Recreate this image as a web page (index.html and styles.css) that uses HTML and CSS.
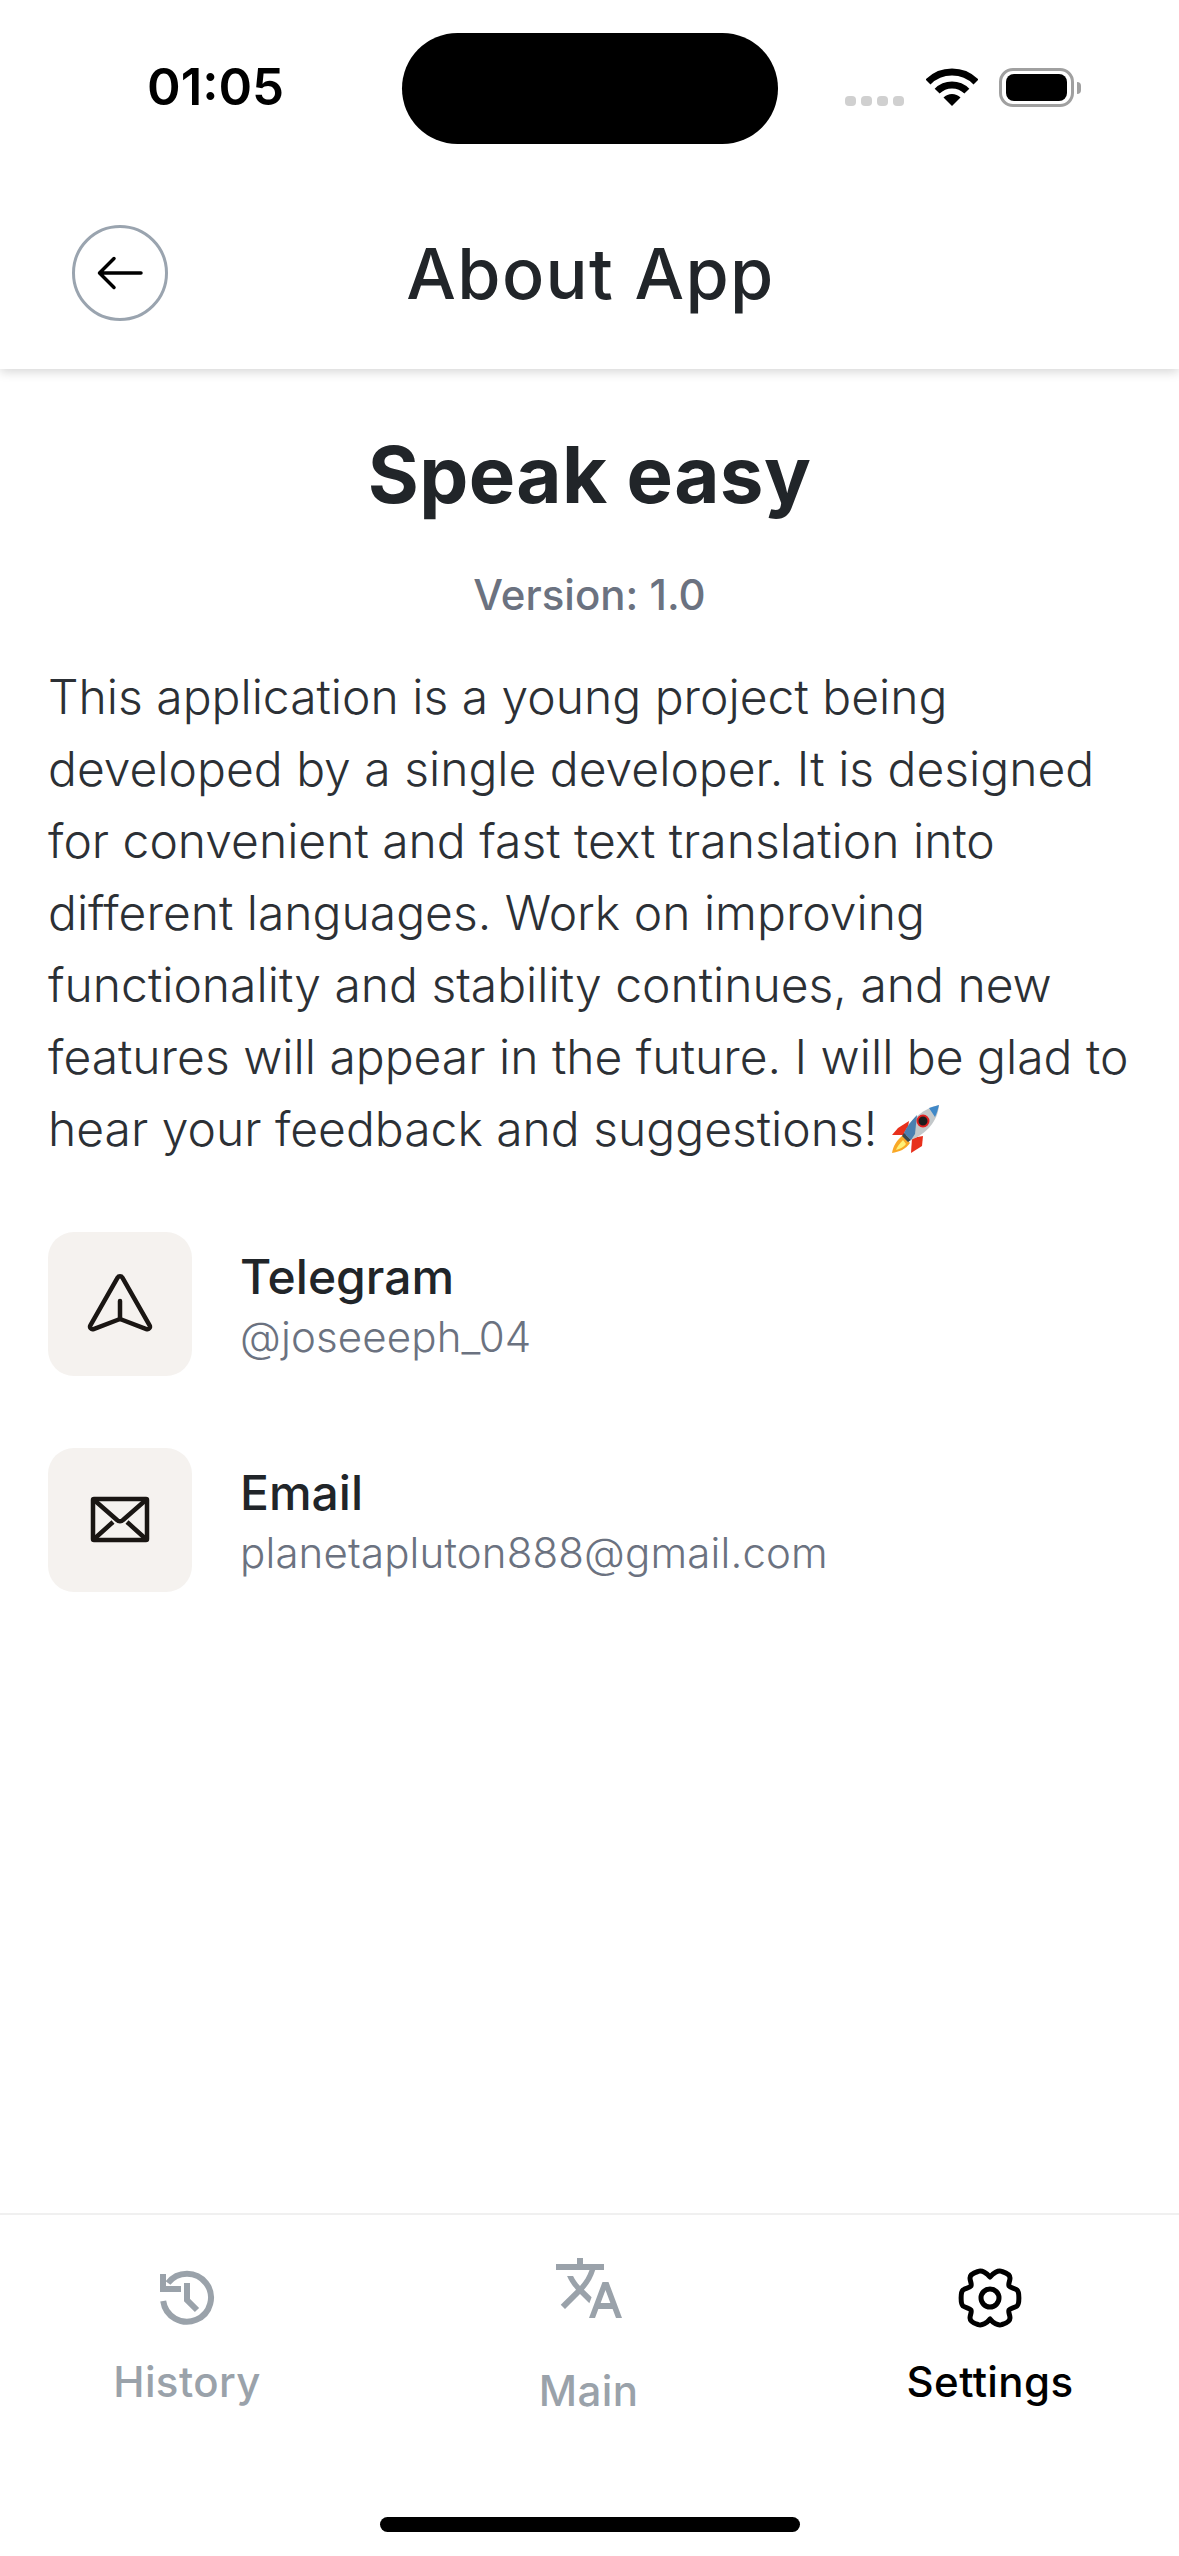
FILE: index.html
```html
<!DOCTYPE html>
<html lang="en">
<head>
  <meta charset="UTF-8" />
  <title>About App</title>
  <link rel="stylesheet" href="styles.css">
</head>
<body>
  <div class="screen">
    <div class="status-bar">
      <span class="time">01:05</span>
      <div class="island"></div>
      <div class="status-icons">
        <div class="signal"><i></i><i></i><i></i><i></i></div>
        <svg class="wifi" width="52" height="38" viewBox="0 0 52 38">
          <path d="M2 14A34 34 0 0 1 50 14M11.15 23.15A21 21 0 0 1 40.85 23.15" fill="none" stroke="#000" stroke-width="7"/>
          <path d="M26 38L17.5 29.5A12 12 0 0 1 34.5 29.5Z" fill="#000"/>
        </svg>
        <div class="battery"><div class="battery-fill"></div></div>
        <div class="battery-nub"></div>
      </div>
    </div>

    <div class="header">
      <div class="back">
        <svg width="48" height="48" viewBox="0 0 48 48" fill="none" stroke="#000" stroke-width="3.500" stroke-linecap="round" stroke-linejoin="round">
          <path d="M45 24H4M18 9.500L3.500 24 18 38.500"/>
        </svg>
      </div>
      <h2 class="title">About App</h2>
    </div>

    <div class="content">
      <h1 class="app-name">Speak easy</h1>
      <p class="version">Version: 1.0</p>
      <p class="about">This application is a young project being developed by a single developer. It is designed for convenient and fast text translation into different languages. Work on improving functionality and stability continues, and new features will appear in the future. I will be glad to hear your feedback and suggestions!
        <svg class="rocket" width="50" height="50" viewBox="0 0 50 50">
          <path d="M18 17L7 24 1 31l15 0z" fill="#e8301c"/>
          <path d="M32 32L31 42l-11 7 1-15z" fill="#e8301c"/>
          <path d="M12 31C6 36 2 42 1 49c7-1 14-4 18-10z" fill="#f9a825"/>
          <path d="M12 36c-3 3-6 7-7 10 4-1 8-3 10-6z" fill="#fff176"/>
          <path d="M13 29C20 15 33 4 48 1c-1 16-13 29-28 35z" fill="#c3c8ca"/>
          <path d="M38 4c3-1 7-2 10-3-1 4-2 8-4 12z" fill="#3f88c8"/>
          <path d="M13 29C16 22 21 16 26 11l-2 19-4 6z" fill="#4a7fb0"/>
          <circle cx="32" cy="17" r="5.500" fill="#1c1c1c" stroke="#e02020" stroke-width="2"/>
          <path d="M13 29l7 7-3 2-6-6z" fill="#37474f"/>
        </svg>
      </p>

      <div class="contact">
        <div class="contact-icon">
          <svg width="72" height="72" viewBox="0 0 72 72" fill="none" stroke="#1a1613" stroke-width="4.500" stroke-linejoin="round" stroke-linecap="round">
            <path d="M33.6 9.600a2.800 2.800 0 0 1 4.800 0L65.600 57.400a2.600 2.600 0 0 1-3.200 3.700L36 51 9.600 61.100a2.600 2.600 0 0 1-3.200-3.700Z"/>
            <path d="M36 33v18"/>
          </svg>
        </div>
        <div>
          <div class="contact-name">Telegram</div>
          <div class="contact-value">@joseeeph_04</div>
        </div>
      </div>

      <div class="contact">
        <div class="contact-icon">
          <svg width="72" height="72" viewBox="0 0 72 72" fill="none" stroke="#1a1613" stroke-width="4.500" stroke-linejoin="round">
            <rect x="9" y="15" width="54" height="41" rx="1"/>
            <path d="M9 15l24 21a4 4 0 0 0 6 0l24-21M9 56l20-18M63 56L43 38"/>
          </svg>
        </div>
        <div>
          <div class="contact-name">Email</div>
          <div class="contact-value">planetapluton888@gmail.com</div>
        </div>
      </div>
    </div>

    <div class="tabbar">
      <div class="tab">
        <svg width="72" height="72" viewBox="0 0 72 72" fill="none" stroke="#9aa2aa" stroke-width="6">
          <path d="M12 12v15h18"/>
          <path d="M12.200 39A24 24 0 1 0 17 21"/>
          <path d="M36 21v17l10 10"/>
        </svg>
        <span class="tab-label">History</span>
      </div>
      <div class="tab tab-main">
        <svg width="72" height="72" viewBox="0 0 24 24" fill="#9aa2aa">
          <path d="M12.870 15.070l-2.540-2.510.03-.03c1.740-1.940 2.980-4.170 3.710-6.530H17V4h-7V2H8v2H1v1.990h11.170C11.500 7.920 10.440 9.750 9 11.350 8.070 10.320 7.300 9.190 6.690 8h-2c.73 1.630 1.730 3.170 2.980 4.560l-5.090 5.020L4 19l5-5 3.110 3.110.76-2.040zM18.500 10h-2L12 22h2l1.120-3h4.750L21 22h2l-4.500-12zm-2.620 7l1.620-4.330L19.120 17h-3.240z"/>
        </svg>
        <span class="tab-label">Main</span>
      </div>
      <div class="tab tab-active">
        <svg width="72" height="72" viewBox="0 0 72 72" fill="none" stroke="#000" stroke-width="5" stroke-linejoin="round">
          <circle cx="36" cy="36" r="9"/>
          <path d="M36 15C39 11 44 8 48 9.500C53 11 56 13 56 16C56 19 54 22 55 24C56.500 26 60 26 63 28C65.500 30 65.500 42 63 44C60 46 56.500 46 55 48C54 50 56 53 56 56C56 59 53 61 48 62.500C44 64 39 61 36 57C33 61 28 64 24 62.500C19 61 16 59 16 56C16 53 18 50 17 48C15.500 46 12 46 9 44C6.500 42 6.500 30 9 28C12 26 15.500 26 17 24C18 22 16 19 16 16C16 13 19 11 24 9.500C28 8 33 11 36 15Z"/>
        </svg>
        <span class="tab-label">Settings</span>
      </div>
    </div>

    <div class="home-row">
      <div class="home-indicator"></div>
    </div>
  </div>
</body>
</html>
```

FILE: styles.css
```css
* {
  box-sizing: border-box;
}
html, body {
  margin: 0;
  padding: 0;
  background: #fff;
}
body {
  font-family: Inter, "Liberation Sans", sans-serif;
  color: #212529;
}
.screen {
  width: 1179px;
  height: 2556px;
  display: flex;
  flex-direction: column;
  overflow: hidden;
}

/* status bar */
.status-bar {
  height: 177px;
  padding: 33px 98px 0 147px;
  display: flex;
  align-items: flex-start;
  flex: none;
  position: relative;
  z-index: 2;
  background: #fff;
}
.time {
  font-size: 51px;
  font-weight: 600;
  line-height: 108px;
  width: 255px;
  color: #000;
}
.island {
  width: 376px;
  height: 111px;
  background: #000;
  border-radius: 56px;
}
.status-icons {
  display: flex;
  align-items: flex-end;
  margin: 35px 0 0 auto;
  height: 39px;
}
.signal {
  display: flex;
  gap: 5px;
  margin-right: 22px;
  margin-bottom: 1px;
}
.signal i {
  width: 11px;
  height: 10px;
  border-radius: 4px;
  background: #d0d0d0;
}
.wifi {
  margin-right: 21px;
  margin-bottom: 1px;
}
.battery {
  width: 75px;
  height: 39px;
  padding: 3px 4px;
  border: 3px solid #a0a0a0;
  border-radius: 14px;
}
.battery-fill {
  height: 100%;
  background: #000;
  border-radius: 8px;
}
.battery-nub {
  width: 4px;
  height: 12px;
  margin: 0 0 13px 3px;
  background: #a0a0a0;
  border-radius: 0 6px 6px 0;
}

/* header */
.header {
  height: 192px;
  padding: 0 72px 0;
  display: flex;
  align-items: center;
  flex: none;
  position: relative;
  z-index: 1;
  background: #fff;
  box-shadow: 0 3px 10px rgba(0,0,0,0.16);
}
.back {
  width: 96px;
  height: 96px;
  border: 3px solid #9aa4af;
  border-radius: 50%;
  display: flex;
  align-items: center;
  justify-content: center;
  flex: none;
}
.title {
  flex: 1;
  margin: 0 94px 0 0;
  text-align: center;
  font-size: 70px;
  font-weight: 450;
  letter-spacing: 1.400px;
  color: #212529;
}

/* content */
.content {
  flex: 1;
  padding: 58px 48px 0;
}
.app-name {
  margin: 0;
  text-align: center;
  font-size: 78px;
  font-weight: 700;
  letter-spacing: 0.4px;
  line-height: 96px;
}
.version {
  margin: 44px 0 0;
  text-align: center;
  font-size: 42px;
  font-weight: 500;
  line-height: 56px;
  color: #6b7280;
}
.about {
  margin: 38px 0 0;
  font-size: 48px;
  font-weight: 300;
  line-height: 72px;
  color: #2c3035;
}
.rocket {
  vertical-align: -8px;
}
.contact {
  display: flex;
  align-items: center;
  gap: 48px;
  margin-top: 72px;
}
.about + .contact {
  margin-top: 67px;
}
.contact-icon {
  width: 144px;
  height: 144px;
  border-radius: 26px;
  background: #f5f2ef;
  display: flex;
  align-items: center;
  justify-content: center;
  flex: none;
}
.contact-name {
  margin-top: 5px;
  font-size: 48px;
  font-weight: 450;
  line-height: 58px;
  color: #212529;
}
.contact-value {
  margin-top: 2px;
  font-size: 42px;
  font-weight: 300;
  letter-spacing: 0.15px;
  line-height: 58px;
  color: #6b7280;
}

/* tabs */
.tabbar {
  height: 264px;
  padding: 47px 69px 0 67px;
  border-top: 2px solid #f0f0f0;
  display: flex;
  justify-content: space-between;
  flex: none;
}
.tab {
  width: 240px;
  display: flex;
  flex-direction: column;
  align-items: center;
}
.tab-main {
  margin-top: -10px;
}
.tab-label {
  margin-top: 23px;
  font-size: 42px;
  font-weight: 450;
  letter-spacing: 0.4px;
  line-height: 50px;
  color: #9aa2aa;
}
.tab-main .tab-label {
  margin-top: 42px;
}
.tab-active .tab-label {
  color: #000;
}
.home-row {
  height: 79px;
  padding-top: 40px;
  display: flex;
  justify-content: center;
  flex: none;
}
.home-indicator {
  width: 420px;
  height: 15px;
  background: #000;
  border-radius: 8px;
}
```
